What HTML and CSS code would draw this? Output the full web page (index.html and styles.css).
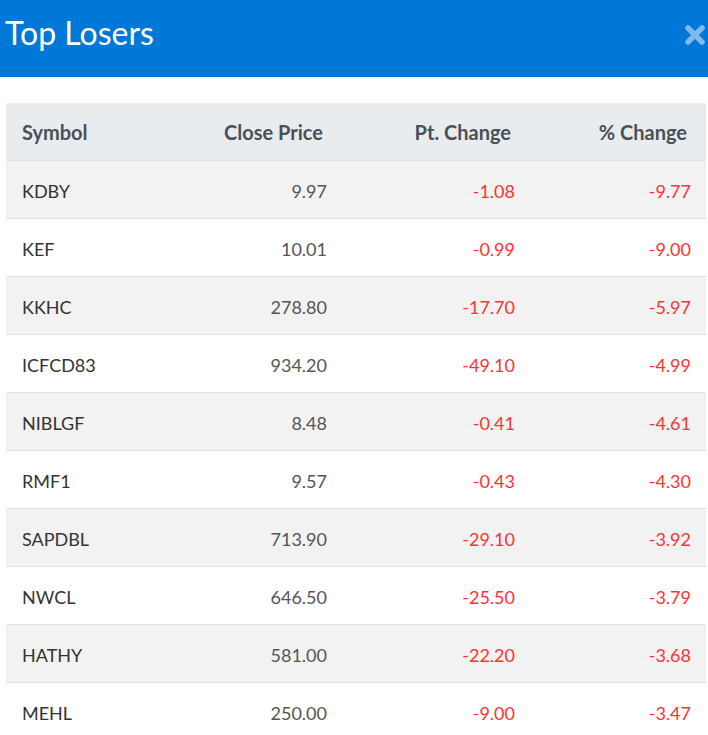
FILE: index.html
```
<!DOCTYPE html>
<html>
<head>
<meta charset="utf-8">
<link rel="stylesheet" href="styles.css">
</head>
<body>
<div class="modal">
  <div class="modal-head">
    <h1 class="title">Top Losers</h1>
    <span class="close" aria-label="close">
      <svg width="22" height="22" viewBox="0 0 22 22"><path d="M4 4 L18 18 M18 4 L4 18" stroke="#80b9ec" stroke-width="5.5" stroke-linecap="round"/></svg>
    </span>
  </div>
  <div class="modal-body">
    <table class="grid">
      <colgroup><col class="c1"><col class="c2"><col class="c3"><col class="c4"></colgroup>
      <thead>
        <tr><th class="l">Symbol</th><th>Close Price</th><th>Pt. Change</th><th>% Change</th></tr>
      </thead>
      <tbody>
        <tr><td class="l">KDBY</td><td>9.97</td><td class="neg">-1.08</td><td class="neg">-9.77</td></tr>
        <tr><td class="l">KEF</td><td>10.01</td><td class="neg">-0.99</td><td class="neg">-9.00</td></tr>
        <tr><td class="l">KKHC</td><td>278.80</td><td class="neg">-17.70</td><td class="neg">-5.97</td></tr>
        <tr><td class="l">ICFCD83</td><td>934.20</td><td class="neg">-49.10</td><td class="neg">-4.99</td></tr>
        <tr><td class="l">NIBLGF</td><td>8.48</td><td class="neg">-0.41</td><td class="neg">-4.61</td></tr>
        <tr><td class="l">RMF1</td><td>9.57</td><td class="neg">-0.43</td><td class="neg">-4.30</td></tr>
        <tr><td class="l">SAPDBL</td><td>713.90</td><td class="neg">-29.10</td><td class="neg">-3.92</td></tr>
        <tr><td class="l">NWCL</td><td>646.50</td><td class="neg">-25.50</td><td class="neg">-3.79</td></tr>
        <tr><td class="l">HATHY</td><td>581.00</td><td class="neg">-22.20</td><td class="neg">-3.68</td></tr>
        <tr><td class="l">MEHL</td><td>250.00</td><td class="neg">-9.00</td><td class="neg">-3.47</td></tr>
      </tbody>
    </table>
  </div>
</div>
</body>
</html>
```
FILE: styles.css
```
html, body { margin: 0; padding: 0; background: #fff; }
body { font-family: "Lato", "Open Sans", sans-serif; overflow: hidden; }
.modal { width: 708px; }
.modal-head {
  background: #0078d7;
  height: 77px;
  display: flex;
  align-items: center;
  justify-content: space-between;
  padding: 0 2px 0 5px;
  box-sizing: border-box;
}
.title {
  margin: 0;
  color: #fff;
  font-weight: 400;
  font-size: 32px;
  line-height: 1;
  padding-bottom: 12px;
}
.close { display: flex; padding-bottom: 8px; }
.modal-body { padding: 26px 2px 0 6px; }
.grid { width: 700px; border-collapse: collapse; table-layout: fixed; }
.c1 { width: 170px; }
.c2 { width: 166px; }
.c3 { width: 188px; }
.c4 { width: 176px; }
.grid th {
  background: #e9ecef;
  color: #4a5057;
  font-weight: 700;
  font-size: 20px;
  height: 57px;
  padding: 2px 19px 0 16px;
  text-align: right;
  border-bottom: 1px solid #dee2e6;
  box-sizing: border-box;
}
.grid td {
  color: #555;
  font-size: 18px;
  height: 58px;
  padding: 3px 15px 0 16px;
  text-align: right;
  border-bottom: 1px solid #dee2e6;
  box-sizing: border-box;
}
.grid .l { text-align: left; }
.grid td.l { color: #333; }
.grid tbody tr:nth-child(odd) td { background: #f2f2f2; }
.grid td.neg { color: #ff3333; }
```
